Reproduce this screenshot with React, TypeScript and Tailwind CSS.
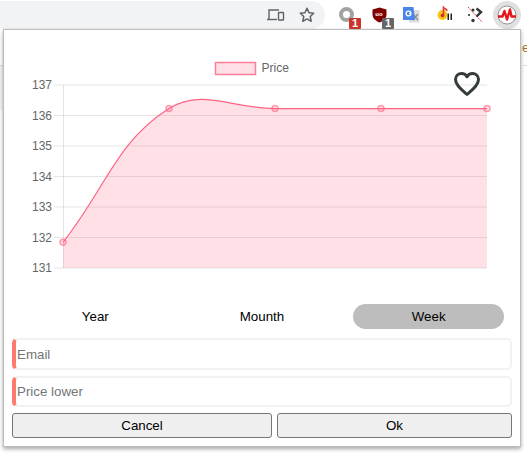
import React from "react";

const ys = [85, 115.5, 146, 176.5, 207, 237.5, 268];
const labels = ["137", "136", "135", "134", "133", "132", "131"];
const pts: [number, number][] = [
  [63, 242.3],
  [169, 108.6],
  [275, 108.6],
  [381, 108.6],
  [487, 108.6],
];
const line =
  "M63 242.3C105.4 188.6 116.7 141.4 169 108.6C201.5 88 232.6 108.6 275 108.6C317.4 108.6 338.6 108.6 381 108.6C423.4 108.6 444.6 108.6 487 108.6";

function Badge({ children, color }: { children: React.ReactNode; color: string }) {
  return (
    <span
      className={`absolute left-[10px] top-[11px] flex h-[11px] w-[12px] items-center justify-center rounded-[1px] text-[11px] font-bold leading-none text-white ${color}`}
    >
      {children}
    </span>
  );
}

function Toolbar() {
  return (
    <div className="flex h-[29px] items-start bg-white">
      <div className="mt-[1px] flex h-[28px] w-[325px] items-center justify-end rounded-r-full bg-[#f1f3f4]">
        <svg width="18" height="14" viewBox="0 0 18 14" fill="none" stroke="#5f6368" strokeWidth="1.4" className="mr-[13px]">
          <path d="M2 11V2h10" />
          <path d="M0 11.5h10" />
          <rect x="11.5" y="4.5" width="5" height="7.5" rx="0.5" />
        </svg>
        <svg width="18" height="18" viewBox="0 0 24 24" fill="none" stroke="#5f6368" strokeWidth="2" strokeLinejoin="round" className="mr-[9px]">
          <path d="M12 3l2.7 6 6.3.7-4.7 4.3 1.3 6.4L12 17.2l-5.6 3.2 1.3-6.4L3 9.7 9.3 9z" />
        </svg>
      </div>

      <div className="relative ml-[14px] mt-[7px] h-[16px] w-[16px]">
        <svg width="16" height="16" viewBox="0 0 16 16" fill="none">
          <circle cx="7.500" cy="7.500" r="5.500" stroke="#a3a3a3" strokeWidth="4" />
        </svg>
        <Badge color="bg-[#c8352b]">1</Badge>
      </div>

      <div className="relative ml-[17px] mt-[7px] h-[16px] w-[16px]">
        <svg width="16" height="16" viewBox="0 0 16 16">
          <path d="M0.500 2.500L7.500 0.500l7 2v5c0 4-3.500 6.500-7 8-3.500-1.500-7-4-7-8z" fill="#800000" />
          <text x="7" y="8.500" textAnchor="middle" className="fill-white text-[6px] font-bold">uo</text>
        </svg>
        <Badge color="bg-[#666666]">1</Badge>
      </div>

      <svg width="17" height="16" viewBox="0 0 17 16" className="ml-[15px] mt-[7px]">
        <path d="M6 3h10.500v12.500H6z" fill="#dcdcdc" />
        <path d="M10 7l5 6M15 7l-5 6" stroke="#78909c" strokeWidth="1.200" />
        <path d="M0 0h10.500l1.500 13H0z" fill="#4a86e8" />
        <circle cx="5.500" cy="6.500" r="2.400" fill="none" stroke="#fff" strokeWidth="1.300" />
        <path d="M6 6.500h2.200" stroke="#fff" strokeWidth="1" />
      </svg>

      <svg width="16" height="15" viewBox="0 0 16 15" className="ml-[17px] mt-[6px]">
        <circle cx="5.500" cy="9" r="5" fill="#fcc419" />
        <circle cx="5.500" cy="9.500" r="1.800" fill="#c62828" />
        <path d="M6.500 9.500V1.500c1 1.500 3.500 1.500 3.500 3.500" fill="none" stroke="#e53935" strokeWidth="1.600" />
        <path d="M10.500 7.500h1.500v6.500h-1.500zM13.500 7.500h1.500v6.500h-1.500z" fill="#222" />
      </svg>

      <svg width="16" height="16" viewBox="0 0 16 16" className="ml-[14px] mt-[7px]">
        <path d="M1 0l14 15" stroke="#e53935" strokeWidth="1" strokeDasharray="2 1" />
        <circle cx="6" cy="3" r="1.500" fill="#333" />
        <path d="M9.500 1.500L14 5 9.500 9.500" fill="none" stroke="#333" strokeWidth="2.400" />
        <circle cx="6" cy="13.500" r="1.700" fill="#333" />
        <circle cx="2" cy="8" r="1.100" fill="#333" />
      </svg>

      <div className="ml-[10px] mt-[1px] flex h-[28px] w-[28px] items-center justify-center rounded-full bg-[#e0e0e0]">
        <svg width="20" height="20" viewBox="0 0 20 20">
          <circle cx="10" cy="10" r="9" fill="#fff" stroke="#555" strokeWidth="0.600" />
          <path d="M1 11.500h4.500l2-5.500 2.500 8.500 3-10 1.500 7h4.500" fill="none" stroke="#e8141c" strokeWidth="2.400" strokeLinejoin="round" />
        </svg>
      </div>
    </div>
  );
}

function Chart() {
  return (
    <div className="relative h-[262px]">
      <svg width="516" height="262" viewBox="4 30 516 262" className="block">
        <rect x="215.500" y="62.500" width="40" height="12" fill="#ff638433" stroke="#ff6384" strokeOpacity="0.8" strokeWidth="1.500" />
        <text x="261.500" y="72" className="fill-[#666666] text-[12px]">Price</text>
        {ys.map((y, i) => (
          <g key={labels[i]}>
            <path d={`M54 ${y}H487`} stroke="#0000001a" strokeWidth="1" />
            <text x="52" y={y + 4} textAnchor="end" className="fill-[#666666] text-[12px]">{labels[i]}</text>
          </g>
        ))}
        <path d="M63.500 85V268" stroke="#0000001a" strokeWidth="1" />
        <path d={`${line}V268H63Z`} fill="#ff638433" />
        <path d={line} fill="none" stroke="#ff6384" strokeWidth="1.200" />
        {pts.map(([x, y]) => (
          <circle key={x} cx={x} cy={y} r="3" fill="#ff638433" stroke="#ff638499" strokeWidth="1.500" />
        ))}
      </svg>
      <svg width="28" height="26" viewBox="0 0 28 26" fill="none" stroke="#333b3b" strokeWidth="3" strokeLinejoin="round" className="absolute left-[449px] top-[41px]">
        <path d="M14 23.500C9 19 2.500 14.500 2.500 8.500C2.500 4.500 5.500 2.500 8.500 2.500C11 2.500 13 3.800 14 5.800C15 3.800 17 2.500 19.500 2.500C22.500 2.500 25.500 4.500 25.500 8.500C25.500 14.500 19 19 14 23.500Z" />
      </svg>
    </div>
  );
}

function Field({ placeholder, height }: { placeholder: string; height: string }) {
  return (
    <input
      placeholder={placeholder}
      className={`block w-full rounded-[5px] border-2 border-l-4 border-[#f2f2f2] border-l-[#ff7b6e] bg-white pl-px text-[13.333px] outline-none placeholder:text-[#757575] ${height}`}
    />
  );
}

export default function App() {
  return (
    <div className="h-[457px] w-[527px] overflow-hidden bg-white font-['Liberation_Sans',Arial,sans-serif] text-black">
      <Toolbar />
      <div className="flex items-start">
        <div className="w-[3px] pt-[36px]">
          <div className="h-[45px] border-t border-[#dddddd] bg-[#f4f4f4]" />
        </div>
        <div className="h-[418px] w-[518px] border border-[#bdbdbd] bg-white shadow-[0_2px_4px_rgba(0,0,0,0.35)]">
          <Chart />
          <div className="px-2">
            <div className="mt-3 grid grid-cols-3 text-[13.333px]">
              <div className="mx-2 flex h-[25px] items-center justify-center rounded-full">Year</div>
              <div className="mx-2 flex h-[25px] items-center justify-center rounded-full">Mounth</div>
              <div className="mx-2 flex h-[25px] items-center justify-center rounded-full bg-[#bdbdbd]">Week</div>
            </div>
            <div className="mt-[9px]">
              <Field placeholder="Email" height="h-[32px]" />
            </div>
            <div className="mt-[6px]">
              <Field placeholder="Price lower" height="h-[31px]" />
            </div>
            <div className="mt-[6px] flex gap-[5px] text-[13.333px]">
              <button className="h-[25px] w-[260px] rounded-[3px] border border-[#767676] bg-[#efefef]">Cancel</button>
              <button className="h-[25px] flex-1 rounded-[3px] border border-[#767676] bg-[#efefef]">Ok</button>
            </div>
          </div>
        </div>
        <div className="w-[6px] overflow-hidden">
          <div className="h-[36px] whitespace-nowrap pt-[12px] pl-[1px] text-[13px] leading-none text-[#b06a2a]">er</div>
          <div className="border-t border-[#dddddd]" />
        </div>
      </div>
    </div>
  );
}
